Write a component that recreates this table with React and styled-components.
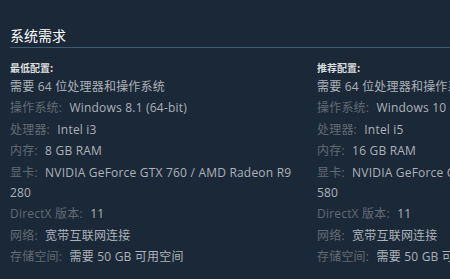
import React from "react";
import styled, { createGlobalStyle } from "styled-components";

const Global = createGlobalStyle`
  html, body {
    margin: 0;
    padding: 0;
    background: #1b2838;
    overflow: hidden;
  }
  body {
    font-family: "Open Sans", "Noto Sans CJK SC", sans-serif;
  }
`;

const Page = styled.div`
  width: 700px;
  padding: 26px 0 0 10px;
  box-sizing: border-box;
`;

const Title = styled.h2`
  margin: 0;
  font-size: 14px;
  line-height: 18px;
  font-weight: normal;
  color: #ffffff;
  padding-bottom: 3px;
  border-bottom: 1px solid #3d5b71;
  font-family: "Noto Sans CJK SC", sans-serif;
`;

const Columns = styled.div`
  display: flex;
  gap: 11px;
  margin-top: 13px;
`;

const Col = styled.div`
  width: 296px;
  flex: none;
`;

const ColHead = styled.div`
  font-size: 10px;
  line-height: 14px;
  font-weight: bold;
  color: #dcdedf;
  margin-bottom: 1.5px;
  font-family: "Noto Sans CJK SC", sans-serif;
`;

const List = styled.ul`
  list-style: none;
  margin: 0;
  padding: 0;
`;

const Item = styled.li`
  font-size: 12px;
  line-height: 20px;
  letter-spacing: 0.2px;
  color: #acb2b8;
  margin-bottom: 1.5px;
`;

const Label = styled.span`
  color: #626b74;
  margin-right: 4px;
`;

const Req = ({ title, rows, note }) => (
  <Col>
    <ColHead>{title}</ColHead>
    <List>
      <Item>{note}</Item>
      {rows.map(([k, v]) => (
        <Item key={k}>
          <Label>{k}:</Label> {v}
        </Item>
      ))}
    </List>
  </Col>
);

const minRows = [
  ["操作系统", "Windows 8.1 (64-bit)"],
  ["处理器", "Intel i3"],
  ["内存", "8 GB RAM"],
  ["显卡", "NVIDIA GeForce GTX 760 / AMD Radeon R9 280"],
  ["DirectX 版本", "11"],
  ["网络", "宽带互联网连接"],
  ["存储空间", "需要 50 GB 可用空间"],
];

const recRows = [
  ["操作系统", "Windows 10 (64-bit)"],
  ["处理器", "Intel i5"],
  ["内存", "16 GB RAM"],
  ["显卡", "NVIDIA GeForce GTX 970 / AMD Radeon RX 580"],
  ["DirectX 版本", "11"],
  ["网络", "宽带互联网连接"],
  ["存储空间", "需要 50 GB 可用空间"],
];

export default function App() {
  return (
    <>
      <Global />
      <Page>
        <Title>系统需求</Title>
        <Columns>
          <Req title="最低配置:" note="需要 64 位处理器和操作系统" rows={minRows} />
          <Req title="推荐配置:" note="需要 64 位处理器和操作系统" rows={recRows} />
        </Columns>
      </Page>
    </>
  );
}
